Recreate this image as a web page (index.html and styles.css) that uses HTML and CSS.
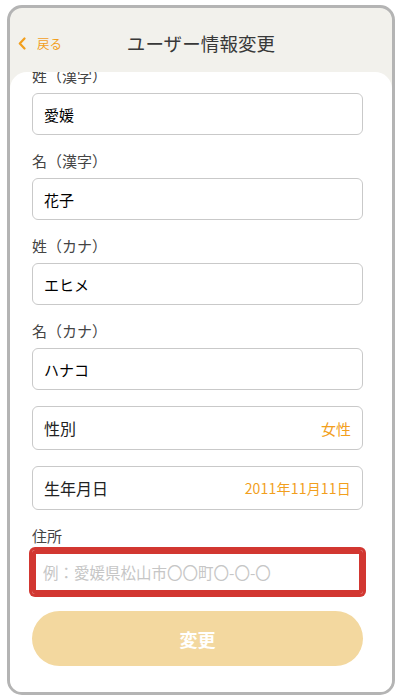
FILE: index.html
```html
<!DOCTYPE html>
<html lang="ja">
<head>
<meta charset="utf-8">
<link rel="stylesheet" href="styles.css">
</head>
<body>
<div class="phone">
  <header class="header">
    <a class="back">
      <svg class="chev" width="8" height="13" viewBox="0 0 8 13"><polyline points="6.5,1.5 1.8,6.5 6.5,11.5" fill="none" stroke="#f29f1d" stroke-width="2.2" stroke-linecap="round" stroke-linejoin="round"/></svg>
      <span>戻る</span>
    </a>
    <h1 class="title">ユーザー情報変更</h1>
    <span></span>
  </header>
  <main class="content">
    <div class="form">
      <label class="label first">姓（漢字）</label>
      <div class="field">愛媛</div>
      <label class="label">名（漢字）</label>
      <div class="field">花子</div>
      <label class="label">姓（カナ）</label>
      <div class="field">エヒメ</div>
      <label class="label">名（カナ）</label>
      <div class="field">ハナコ</div>
      <div class="field row gap-top"><span class="key">性別</span><span class="val">女性</span></div>
      <div class="field row gap-top"><span class="key">生年月日</span><span class="val date">2011年11月11日</span></div>
      <label class="label addr">住所</label>
      <div class="field highlight"><span class="ph">例：愛媛県松山市〇〇町〇-〇-〇</span></div>
      <button class="submit">変更</button>
    </div>
  </main>
</div>
</body>
</html>
```

FILE: styles.css
```css
* { box-sizing: border-box; }
html, body {
  margin: 0;
  padding: 0;
  background: #ffffff;
  font-family: "Noto Sans CJK JP", "Noto Sans", sans-serif;
}
.phone {
  margin: 5px 0 0 7px;
  width: 388px;
  height: 690px;
  border: 3px solid #b4b4b4;
  border-radius: 15px;
  background: #f2f1ec;
  overflow: hidden;
  display: flex;
  flex-direction: column;
}
.header {
  height: 64px;
  flex: none;
  display: grid;
  grid-template-columns: 1fr auto 1fr;
  align-items: center;
  padding-top: 6px;
}
.back {
  display: flex;
  align-items: center;
  gap: 11px;
  padding-left: 8px;
  color: #f29f1d;
  font-size: 12.5px;
}
.chev { display: block; }
.title {
  margin: 0;
  font-size: 18.5px;
  font-weight: 400;
  color: #383838;
  letter-spacing: 0.1px;
}
.content {
  flex: 1;
  background: #ffffff;
  border-radius: 17px 17px 0 0;
  overflow: hidden;
  padding: 0 29px 0 22px;
}
.form {
  display: flex;
  flex-direction: column;
}
.label {
  display: block;
  font-size: 15px;
  line-height: 22px;
  color: #444;
  margin: 15px 0 6px;
}
.label.first { margin-top: -7px; }
.label.addr { margin-top: 15px; margin-bottom: 3px; }
.field {
  height: 42px;
  border: 1px solid #c9c9c9;
  border-radius: 6px;
  display: flex;
  align-items: center;
  padding: 0 11px;
  font-size: 15px;
  font-weight: 400;
  color: #000;
}
.row {
  height: 44px;
  justify-content: space-between;
}
.gap-top { margin-top: 16px; }
.key { font-size: 16px; color: #222; }
.val { font-size: 15px; color: #f29f1d; }
.val.date { font-size: 14px; letter-spacing: 0.2px; }
.highlight {
  height: 44px;
  border: 4px solid #d23731;
  box-shadow: 0 0 0 3px #d23731;
  border-radius: 3px;
  padding-left: 7px;
}
.ph {
  font-size: 15.5px;
  color: #c6c6c6;
}
.submit {
  margin-top: 17px;
  height: 55px;
  border: none;
  border-radius: 28px;
  background: #f3d89f;
  color: #ffffff;
  font-family: inherit;
  font-size: 18px;
  font-weight: 700;
}
```
